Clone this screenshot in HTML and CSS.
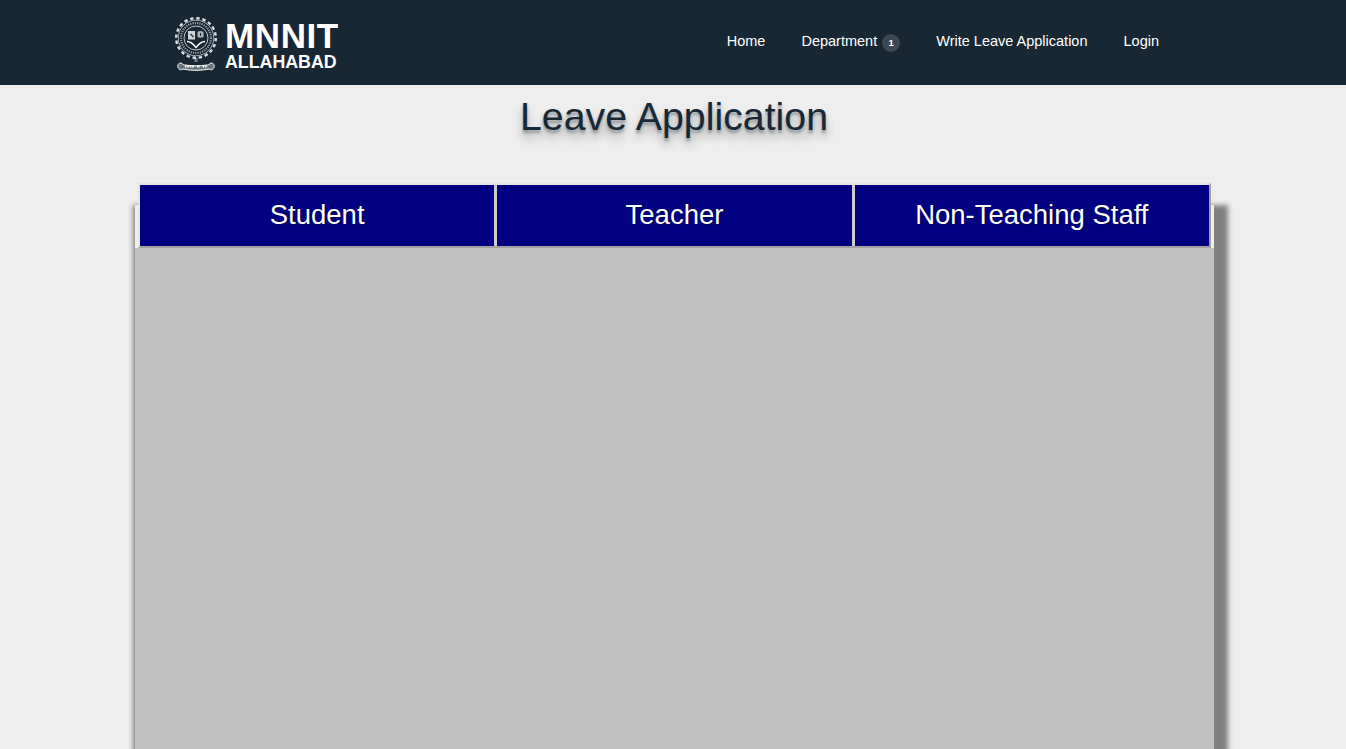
FILE: index.html
```html
<!DOCTYPE html>
<html lang="en">
<head>
    <meta charset="UTF-8">
    <meta name="viewport" content="width=device-width, initial-scale=1.0">
    <title>Leave Application</title>
    <link rel="stylesheet" href="styles.css">
</head>
<body>
    <nav class="navbar">
        <a class="brand" href="#">
            <svg class="emblem" width="46" height="58" viewBox="0 0 46 58" fill="none" stroke="#fff">
                <!-- gear -->
                <circle cx="21" cy="22" r="19.800" stroke-width="2.400" stroke-dasharray="3.400 2.800" opacity="0.85"/>
                <circle cx="21" cy="22" r="17.800" stroke-width="0.700" opacity="0.9"/>
                <circle cx="21" cy="22" r="15" stroke-width="2.200" stroke-dasharray="1.200 1.100" opacity="0.55"/>
                <circle cx="21" cy="22" r="12" stroke-width="0.800" opacity="0.9"/>
                <!-- book and waves -->
                <path d="M13 15h7v8.500h-7z" fill="#fff" stroke="none" opacity="0.8"/>
                <path d="M22.500 16c1.500-1.200 4-1.200 6 0v5c-2 1-4.500 1-6 0z" fill="#fff" stroke="none" opacity="0.65"/>
                <path d="M12 25.500c4 0 6 2 9 6 3-4 5-6 9-6" stroke-width="1.300"/>
                <path d="M15.500 18l3 3M25.500 17v3" stroke="#172834" stroke-width="1.100"/>
                <!-- stem and banner -->
                <path d="M21 42.500v4" stroke-width="3" stroke-dasharray="1 1" opacity="0.8"/>
                <path d="M7 47.500c-4-2-6 4-2 6 1 .5 2 .3 3-.5 8 1.800 18 1.800 26 0 1 .8 2 1 3 .5 4-2 2-8-2-6-1 1-2 1.500-3 1.500-7 1.100-15 1.100-22 0-1 0-2-.5-3-1.500z" fill="#fff" fill-opacity="0.35" stroke-width="1"/>
                <path d="M10 50.500h9M22 50.500h3M27.500 50.500h5" stroke="#fff" stroke-width="1.800" stroke-dasharray="1.600 .8"/>
            </svg>
            <span class="brand-text">
                <span class="brand-name">MNNIT</span>
                <span class="brand-city">ALLAHABAD</span>
            </span>
        </a>
        <ul class="nav-links">
            <li><a href="#">Home</a></li>
            <li><a href="#">Department <span class="badge">1</span></a></li>
            <li><a href="#">Write Leave Application</a></li>
            <li><a href="#">Login</a></li>
        </ul>
    </nav>

    <h1 class="page-title">Leave Application</h1>

    <div class="panel">
        <div class="tabs">
            <a class="tab" href="#">Student</a>
            <a class="tab" href="#">Teacher</a>
            <a class="tab" href="#">Non-Teaching Staff</a>
        </div>
        <div class="panel-body"></div>
    </div>
</body>
</html>
```

FILE: styles.css
```css
html, body {
    height: 749px;
    overflow: hidden;
}

body {
    margin: 0;
    background-color: #eeeeee;
    font-family: "Liberation Sans", Arial, sans-serif;
}

a {
    color: #fff;
    text-decoration: none;
}

.navbar {
    display: flex;
    justify-content: space-between;
    height: 85px;
    padding: 0 187px 0 175px;
    background-color: #172834;
}

.brand {
    display: flex;
    gap: 4px;
    padding-top: 16px;
}

.brand-text {
    display: flex;
    flex-direction: column;
    font-weight: bold;
}

.brand-name {
    font-size: 35px;
    line-height: 36px;
    letter-spacing: 0.6px;
    margin-top: 2px;
}

.brand-city {
    font-size: 17.800px;
    line-height: 17px;
}

.nav-links {
    display: flex;
    gap: 36px;
    margin: 0;
    padding: 33px 0 0;
    list-style: none;
    font-size: 14.500px;
    line-height: 17px;
}

.badge {
    display: inline-block;
    width: 18px;
    height: 18px;
    margin-left: 1px;
    border-radius: 50%;
    background-color: #3d4852;
    font-size: 9.500px;
    line-height: 18px;
    font-weight: bold;
    text-align: center;
}

.page-title {
    height: 112px;
    margin: 8px 0 0;
    padding-left: 2px;
    color: #172834;
    font-size: 39.300px;
    line-height: 46px;
    font-weight: normal;
    text-align: center;
    text-shadow: 0 3px 3px #8f959b, 0 8px 10px rgba(0, 0, 0, 0.3);
}

.panel {
    display: flow-root;
    width: 1079px;
    height: 600px;
    margin-left: 135px;
    background-color: #eeeeee;
    box-shadow: 6px 8px 5px 8px #808080;
}

.tabs {
    display: grid;
    grid-template-columns: repeat(3, 1fr);
    gap: 3px;
    box-sizing: border-box;
    height: 65px;
    margin: -22px 3px 0;
    border-style: solid;
    border-width: 2px;
    border-color: #e6e6e6 #a0a0a0 #a0a0a0 #e6e6e6;
    background-color: #cccccc;
}

.tab {
    display: flex;
    align-items: center;
    justify-content: center;
    padding-bottom: 2px;
    background-color: #000080;
    font-size: 27.500px;
    text-shadow: 1px 1px 1px rgba(0, 0, 0, 0.3);
}

.panel-body {
    height: 560px;
    background-color: #c0c0c0;
}
```
